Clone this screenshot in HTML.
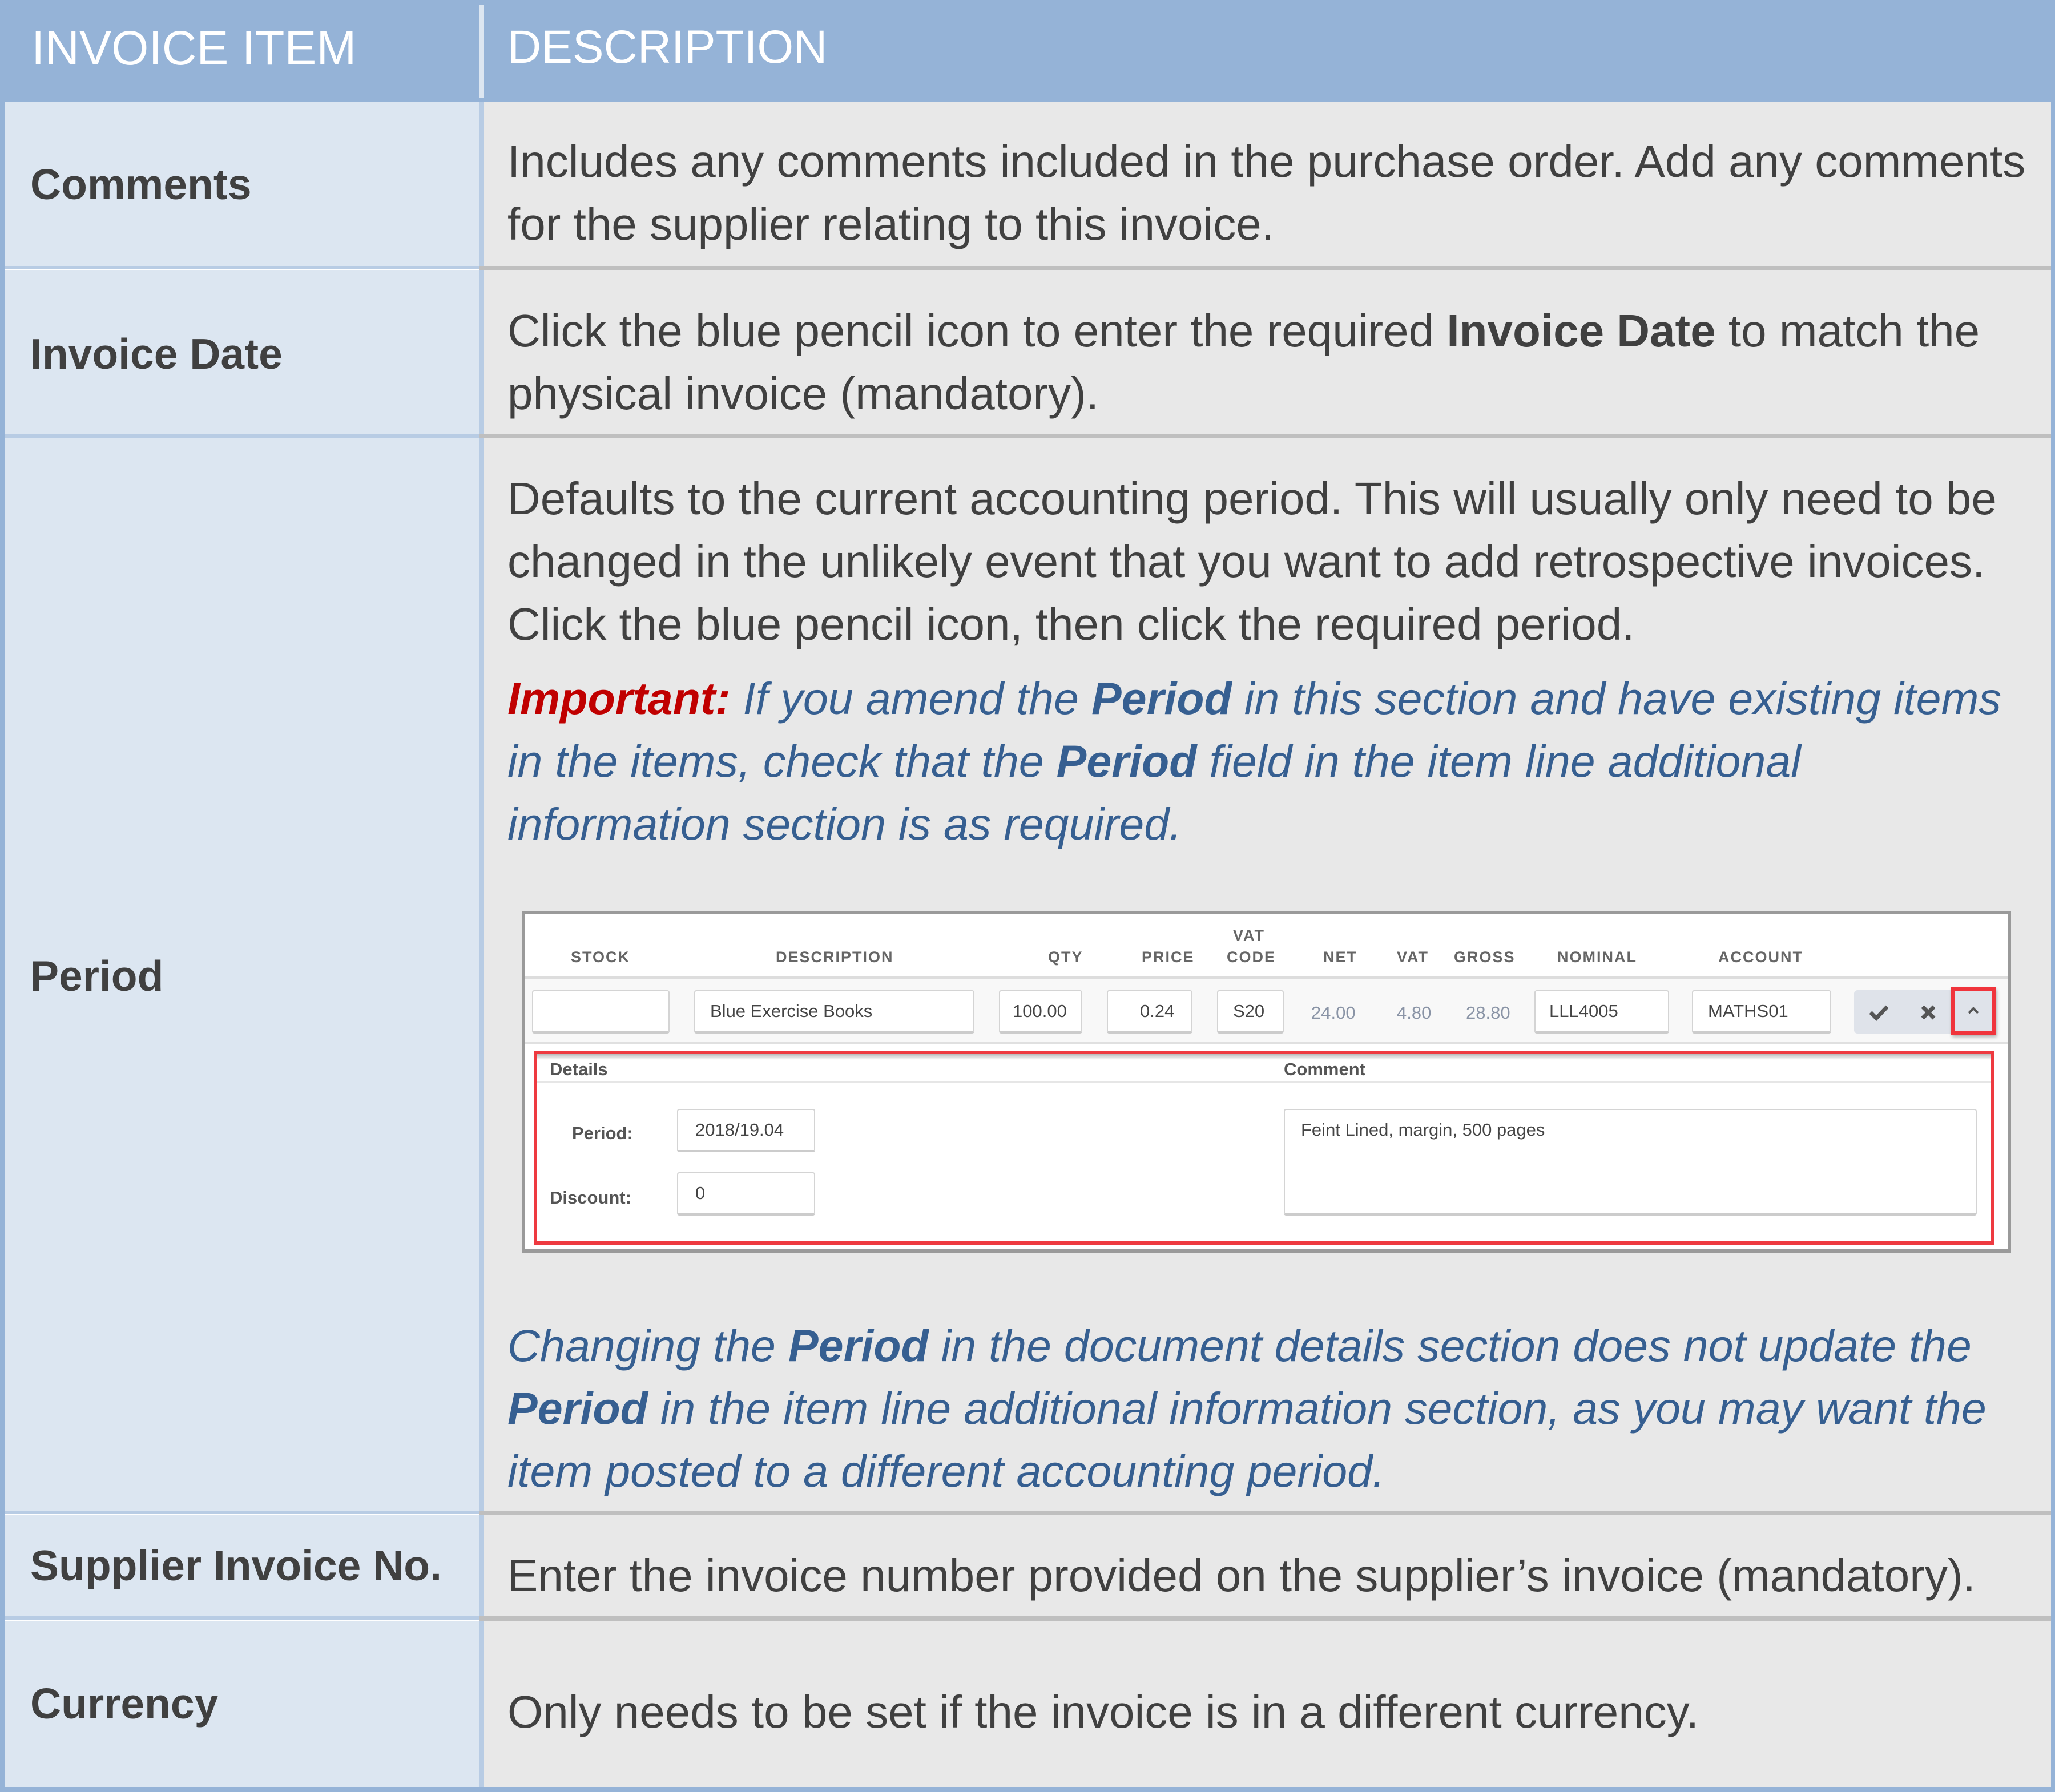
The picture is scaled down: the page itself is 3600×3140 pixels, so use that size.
<!DOCTYPE html>
<html><head><meta charset="utf-8"><style>
*{margin:0;padding:0;box-sizing:border-box}
body{width:3600px;height:3140px;position:relative;background:#95b3d7;font-family:"Liberation Sans",sans-serif;overflow:hidden}
.a{position:absolute}
.t{position:absolute;white-space:nowrap;line-height:1}
.L{left:53px;font-weight:bold;font-size:75px;color:#404040}
.R{left:889px;font-size:80px;color:#404040}
.I{left:889px;font-size:79px;color:#365f91;font-style:italic}
.sh{font-size:27px;font-weight:bold;color:#666;letter-spacing:2px}
.in{position:absolute;background:#fff;border:2px solid #d4d4d4;border-bottom:4px solid #ccc;border-radius:4px;font-size:31px;color:#444;padding-left:26px;line-height:70px}
</style></head><body>
<div class="a" style="left:8px;top:0;width:3585px;height:179px;background:#95b3d7"></div>
<div class="a" style="left:840px;top:8px;width:8px;height:164px;background:#dce6f1"></div>
<div class="t" style="left:55px;top:42px;font-size:84px;color:#fff">INVOICE ITEM</div>
<div class="t" style="left:889px;top:42px;font-size:82px;color:#fff">DESCRIPTION</div>
<div class="a" style="left:8px;top:179px;width:832px;height:2953px;background:#dce6f1"></div>
<div class="a" style="left:840px;top:179px;width:8px;height:2953px;background:#b8cce4"></div>
<div class="a" style="left:848px;top:179px;width:2745px;height:2953px;background:#e8e8e8"></div>
<div class="a" style="left:8px;top:466px;width:832px;height:7px;background:#b8cce4;border-bottom:1px solid #fff"></div>
<div class="a" style="left:840px;top:466px;width:2753px;height:7px;background:#bfbfbf"></div>
<div class="a" style="left:8px;top:761px;width:832px;height:7px;background:#b8cce4;border-bottom:1px solid #fff"></div>
<div class="a" style="left:840px;top:761px;width:2753px;height:7px;background:#bfbfbf"></div>
<div class="a" style="left:8px;top:2647px;width:832px;height:7px;background:#b8cce4;border-bottom:1px solid #fff"></div>
<div class="a" style="left:840px;top:2647px;width:2753px;height:7px;background:#bfbfbf"></div>
<div class="a" style="left:8px;top:2832px;width:832px;height:8px;background:#b8cce4;border-bottom:1px solid #fff"></div>
<div class="a" style="left:840px;top:2832px;width:2753px;height:8px;background:#bfbfbf"></div>

<div class="t L" style="top:286px">Comments</div>
<div class="t L" style="top:583px">Invoice Date</div>
<div class="t L" style="top:1673px">Period</div>
<div class="t L" style="top:2706px">Supplier Invoice No.</div>
<div class="t L" style="top:2948px">Currency</div>

<div class="t R" style="top:243px">Includes any comments included in the purchase order. Add any comments</div>
<div class="t R" style="top:353px">for the supplier relating to this invoice.</div>
<div class="t R" style="top:540px">Click the blue pencil icon to enter the required <b>Invoice Date</b> to match the</div>
<div class="t R" style="top:650px">physical invoice (mandatory).</div>
<div class="t R" style="top:834px">Defaults to the current accounting period. This will usually only need to be</div>
<div class="t R" style="top:944px">changed in the unlikely event that you want to add retrospective invoices.</div>
<div class="t R" style="top:1054px">Click the blue pencil icon, then click the required period.</div>
<div class="t I" style="top:1184px"><b style="color:#c00000">Important:</b> If you amend the <b>Period</b> in this section and have existing items</div>
<div class="t I" style="top:1294px">in the items, check that the <b>Period</b> field in the item line additional</div>
<div class="t I" style="top:1404px">information section is as required.</div>
<div class="t I" style="top:2318px">Changing the <b>Period</b> in the document details section does not update the</div>
<div class="t I" style="top:2428px"><b>Period</b> in the item line additional information section, as you may want the</div>
<div class="t I" style="top:2538px">item posted to a different accounting period.</div>
<div class="t R" style="top:2721px">Enter the invoice number provided on the supplier’s invoice (mandatory).</div>
<div class="t R" style="top:2960px">Only needs to be set if the invoice is in a different currency.</div>

<div class="a" style="left:914px;top:1596px;width:2609px;height:600px;background:#fff;border:6px solid #9a9a9a;border-bottom-width:8px"></div>
<div class="a" style="left:920px;top:1711px;width:2597px;height:5px;background:#ddd"></div>
<div class="a" style="left:920px;top:1716px;width:2597px;height:114px;background:#f8f8f8;border-bottom:4px solid #e0e0e0"></div>
<div class="t sh" style="left:2160px;top:1626px">VAT</div>
<div class="t sh" style="left:1000px;top:1664px">STOCK</div>
<div class="t sh" style="left:1359px;top:1664px">DESCRIPTION</div>
<div class="t sh" style="left:1836px;top:1664px">QTY</div>
<div class="t sh" style="left:2000px;top:1664px">PRICE</div>
<div class="t sh" style="left:2149px;top:1664px">CODE</div>
<div class="t sh" style="left:2318px;top:1664px">NET</div>
<div class="t sh" style="left:2447px;top:1664px">VAT</div>
<div class="t sh" style="left:2547px;top:1664px">GROSS</div>
<div class="t sh" style="left:2728px;top:1664px">NOMINAL</div>
<div class="t sh" style="left:3010px;top:1664px">ACCOUNT</div>

<div class="in" style="left:932px;top:1735px;width:241px;height:76px"></div>
<div class="in" style="left:1216px;top:1735px;width:491px;height:76px">Blue Exercise Books</div>
<div class="in" style="left:1750px;top:1735px;width:146px;height:76px;padding-left:22px">100.00</div>
<div class="in" style="left:1939px;top:1735px;width:150px;height:76px;padding-left:56px">0.24</div>
<div class="in" style="left:2132px;top:1735px;width:117px;height:76px;padding-left:26px">S20</div>
<div class="t" style="left:2297px;top:1759px;font-size:31px;color:#8a94a6">24.00</div>
<div class="t" style="left:2447px;top:1759px;font-size:31px;color:#8a94a6">4.80</div>
<div class="t" style="left:2568px;top:1759px;font-size:31px;color:#8a94a6">28.80</div>
<div class="in" style="left:2688px;top:1735px;width:236px;height:76px;padding-left:24px">LLL4005</div>
<div class="in" style="left:2964px;top:1735px;width:244px;height:76px;padding-left:26px">MATHS01</div>
<div class="a" style="left:3248px;top:1735px;width:246px;height:76px;background:#dfe3ea;border-radius:6px"></div>
<svg class="a" style="left:3272px;top:1758px" width="40" height="32" viewBox="0 0 40 32"><path d="M5 16 L15 26 L34 6" fill="none" stroke="#555" stroke-width="7"/></svg>
<svg class="a" style="left:3364px;top:1760px" width="28" height="28" viewBox="0 0 28 28"><path d="M4 4 L24 24 M24 4 L4 24" fill="none" stroke="#555" stroke-width="7"/></svg>
<div class="a" style="left:3418px;top:1730px;width:78px;height:83px;border:6px solid #f0343c;background:#dfe3ea;box-shadow:2px 4px 6px rgba(0,0,0,.3)"></div>
<svg class="a" style="left:3446px;top:1764px" width="22" height="14" viewBox="0 0 22 14"><path d="M3 11 L11 3 L19 11" fill="none" stroke="#555" stroke-width="4"/></svg>

<div class="a" style="left:935px;top:1841px;width:2559px;height:340px;border:6px solid #ee3a40"></div>
<div class="a" style="left:941px;top:1847px;width:2547px;height:10px;background:linear-gradient(#bbb,#fff)"></div>
<div class="a" style="left:941px;top:1894px;width:2547px;height:3px;background:#e6e6e6"></div>
<div class="t" style="left:963px;top:1858px;font-size:31px;font-weight:bold;color:#555">Details</div>
<div class="t" style="left:2249px;top:1858px;font-size:31px;font-weight:bold;color:#555">Comment</div>
<div class="t" style="left:1002px;top:1970px;font-size:31px;font-weight:bold;color:#555">Period:</div>
<div class="t" style="left:963px;top:2083px;font-size:31px;font-weight:bold;color:#555">Discount:</div>
<div class="in" style="left:1186px;top:1943px;width:242px;height:76px;padding-left:30px">2018/19.04</div>
<div class="in" style="left:1186px;top:2054px;width:242px;height:76px;padding-left:30px">0</div>
<div class="in" style="left:2249px;top:1943px;width:1214px;height:187px;line-height:70px;padding-left:28px">Feint Lined, margin, 500 pages</div>
</body></html>
